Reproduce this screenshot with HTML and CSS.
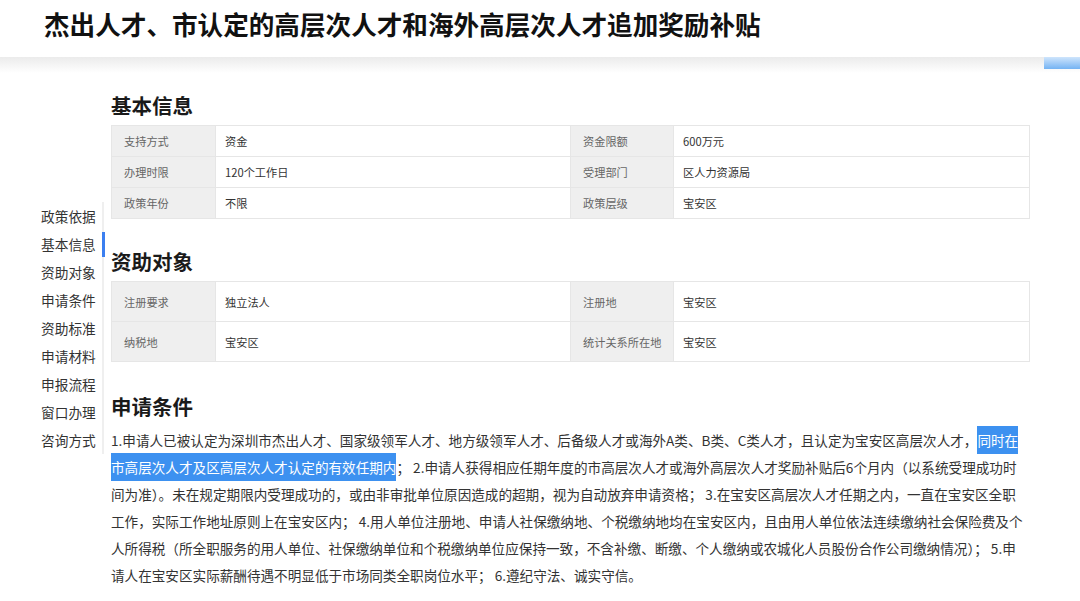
FILE: index.html
```html
<!DOCTYPE html>
<html lang="zh-CN">
<head>
<meta charset="utf-8">
<title>杰出人才、市认定的高层次人才和海外高层次人才追加奖励补贴</title>
<link rel="stylesheet" href="styles.css">
</head>
<body>
<header class="header">
  <h1 class="title">杰出人才、市认定的高层次人才和海外高层次人才追加奖励补贴</h1>
</header>
<div class="band"><span class="band-accent"></span></div>

<div class="layout">
  <nav class="side-nav">
    <ul class="nav-list">
      <li class="nav-item">政策依据</li>
      <li class="nav-item active">基本信息</li>
      <li class="nav-item">资助对象</li>
      <li class="nav-item">申请条件</li>
      <li class="nav-item">资助标准</li>
      <li class="nav-item">申请材料</li>
      <li class="nav-item">申报流程</li>
      <li class="nav-item">窗口办理</li>
      <li class="nav-item">咨询方式</li>
    </ul>
  </nav>

  <main class="content">
    <section class="section">
      <h2 class="section-title">基本信息</h2>
      <table class="info-table rows-basic">
        <colgroup><col class="c-label"><col class="c-value"><col class="c-label2"><col></colgroup>
        <tr><td class="label">支持方式</td><td class="value">资金</td><td class="label">资金限额</td><td class="value">600万元</td></tr>
        <tr><td class="label">办理时限</td><td class="value">120个工作日</td><td class="label">受理部门</td><td class="value">区人力资源局</td></tr>
        <tr><td class="label">政策年份</td><td class="value">不限</td><td class="label">政策层级</td><td class="value">宝安区</td></tr>
      </table>
    </section>

    <section class="section">
      <h2 class="section-title">资助对象</h2>
      <table class="info-table rows-tall">
        <colgroup><col class="c-label"><col class="c-value"><col class="c-label2"><col></colgroup>
        <tr><td class="label">注册要求</td><td class="value">独立法人</td><td class="label">注册地</td><td class="value">宝安区</td></tr>
        <tr><td class="label">纳税地</td><td class="value">宝安区</td><td class="label">统计关系所在地</td><td class="value">宝安区</td></tr>
      </table>
    </section>

    <section class="section">
      <h2 class="section-title">申请条件</h2>
      <p class="body-text">1.申请人已被认定为深圳市杰出人才、国家级领军人才、地方级领军人才、后备级人才或海外A类、B类、C类人才，且认定为宝安区高层次人才，<span class="hl">同时在<br>市高层次人才及区高层次人才认定的有效任期内</span>； 2.申请人获得相应任期年度的市高层次人才或海外高层次人才奖励补贴后6个月内（以系统受理成功时<br>间为准）。未在规定期限内受理成功的，或由非审批单位原因造成的超期，视为自动放弃申请资格； 3.在宝安区高层次人才任期之内，一直在宝安区全职<br>工作，实际工作地址原则上在宝安区内； 4.用人单位注册地、申请人社保缴纳地、个税缴纳地均在宝安区内，且由用人单位依法连续缴纳社会保险费及个<br>人所得税（所全职服务的用人单位、社保缴纳单位和个税缴纳单位应保持一致，不含补缴、断缴、个人缴纳或农城化人员股份合作公司缴纳情况）； 5.申<br>请人在宝安区实际薪酬待遇不明显低于市场同类全职岗位水平； 6.遵纪守法、诚实守信。</p>
    </section>
  </main>
</div>
</body>
</html>
```

FILE: styles.css
```css
* { box-sizing: border-box; }

html, body {
  margin: 0;
  padding: 0;
  background: #ffffff;
}

body {
  font-family: "Noto Sans CJK SC", "Noto Sans", sans-serif;
  color: #333333;
  width: 1080px;
  overflow: hidden;
}

.header {
  height: 57px;
  padding-left: 44px;
}

.title {
  margin: 0;
  font-size: 25.6px;
  line-height: 48px;
  font-weight: 700;
  color: #111111;
  white-space: nowrap;
}

.band {
  height: 16px;
  background: linear-gradient(#ebebeb, #ffffff);
  display: flex;
  justify-content: flex-end;
}

.band-accent {
  width: 36px;
  height: 12px;
  background: linear-gradient(#cfe5fc, #74b3f3);
}

.layout {
  display: flex;
  align-items: flex-start;
}

.side-nav {
  width: 104px;
  flex: none;
  margin-top: 129px;
}

.nav-list {
  list-style: none;
  margin: 0;
  padding: 0 0 0 41px;
  border-right: 2px solid #efefef;
}

.nav-item {
  font-size: 13.7px;
  line-height: 28px;
  color: #333333;
  white-space: nowrap;
  position: relative;
}

.nav-item.active::after {
  content: "";
  position: absolute;
  right: -3px;
  top: 2px;
  bottom: 1px;
  width: 3px;
  background: #3b7ff0;
}

.content {
  margin-left: 7px;
  width: 919px;
  padding-top: 18px;
}

.section + .section {
  margin-top: 28px;
}

.section:last-child {
  margin-top: 30px;
}

.section-title {
  margin: 0 0 6px;
  font-size: 20.5px;
  line-height: 28px;
  font-weight: 700;
  color: #1a1a1a;
}

.info-table {
  width: 919px;
  table-layout: fixed;
  border-collapse: collapse;
  border: 1px solid #e6e6e6;
}

.c-label { width: 104px; }
.c-value { width: 355px; }
.c-label2 { width: 103px; }

.info-table td {
  border: 1px solid #e6e6e6;
  font-size: 11.2px;
  padding: 0;
  white-space: nowrap;
}

.rows-basic td { height: 31px; }
.rows-tall td { height: 40px; }

.info-table .label {
  background: #efefef;
  color: #666666;
  padding-left: 12px;
}

.info-table .value {
  background: #ffffff;
  color: #333333;
  padding-left: 9px;
}

.body-text {
  margin: 7px 0 0;
  font-size: 13.6px;
  line-height: 27px;
  color: #333333;
  width: 940px;
}

.hl {
  background: #3d91f0;
  color: #ffffff;
  padding: 4px 0;
}
```
